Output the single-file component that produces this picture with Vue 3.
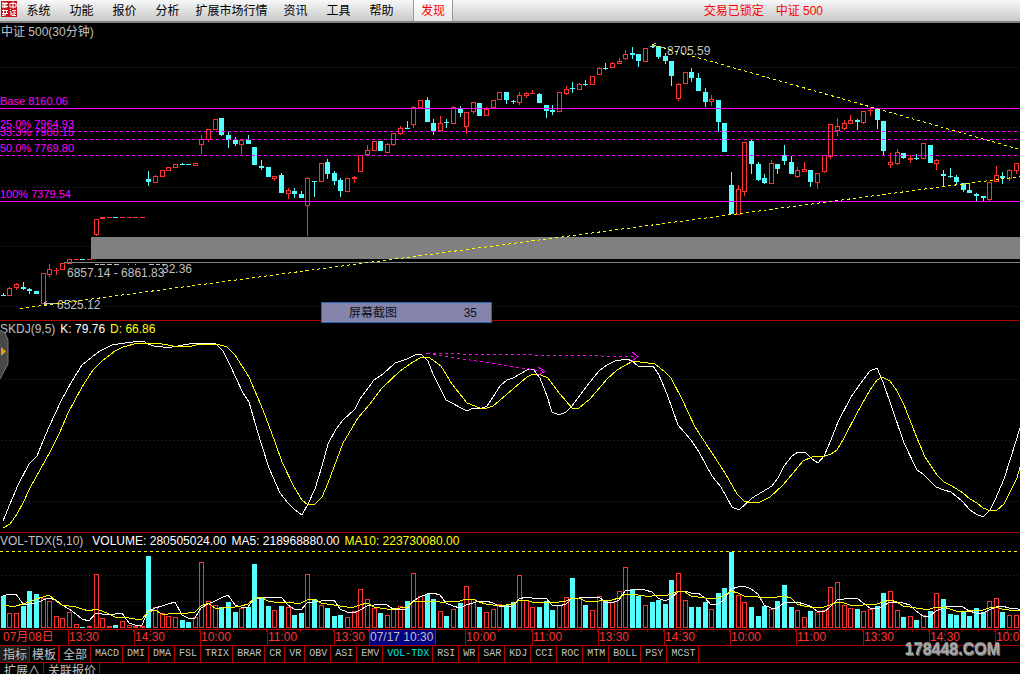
<script setup>
import { ref } from 'vue'

const menu = ['系统', '功能', '报价', '分析', '扩展市场行情', '资讯', '工具', '帮助']
const tabs = ['MACD', 'DMI', 'DMA', 'FSL', 'TRIX', 'BRAR', 'CR', 'VR', 'OBV', 'ASI', 'EMV', 'VOL-TDX', 'RSI', 'WR', 'SAR', 'KDJ', 'CCI', 'ROC', 'MTM', 'BOLL', 'PSY', 'MCST']
const active = ref('VOL-TDX')

const axis = [
  { t: '07月08日', w: 68, kind: 'first' },
  { t: '13:30', w: 66 }, { t: '14:30', w: 66 }, { t: '10:00', w: 67 },
  { t: '11:00', w: 67 }, { t: '13:30', w: 35, kind: 'short' }, { t: '07/17 10:30', w: 66, kind: 'cursor' },
  { t: '', w: 30, kind: 'rest' }, { t: '10:00', w: 67 }, { t: '11:00', w: 66 }, { t: '13:30', w: 66 },
  { t: '14:30', w: 66 }, { t: '10:00', w: 66 }, { t: '11:00', w: 67 }, { t: '13:30', w: 66 },
  { t: '14:30', w: 66 }, { t: '10:00', w: 25, kind: 'short' },
]
const axisTotal = axis.reduce((sum, a) => sum + a.w, 0)

// direction, body top, body bottom, high, low
const candleData = `c295 295 293 295,r288 295 287 295,r284 287 283 289,c287 288 282 289,c289 290 288 293,c291 293 291 293,r273 303 273 303,r269 274 264 276,r270 270 268 274,r263 269 263 269,r259 263 259 263,r259 259 259 259,c259 259 259 259,r259 259 259 259,r219 234 219 235,r217 218 217 218,r217 217 217 217,c217 217 217 217,r217 217 217 217,r217 217 217 217,r217 217 217 217,r217 217 217 217,c179 181 171 185,r176 182 175 182,r170 176 170 176,r167 170 167 170,r164 167 164 167,c164 164 163 164,c164 164 164 164,r163 165 163 165,r139 144 135 153,r129 139 129 141,r119 129 119 129,c118 134 118 135,c135 139 131 147,c140 143 137 145,r140 144 139 153,c140 143 135 143,c147 164 147 164,c166 167 160 169,c167 176 167 176,r176 178 176 180,c175 192 173 192,r190 193 188 198,c191 193 188 197,c194 197 191 197,r178 205 177 235,c181 181 181 196,r163 181 163 181,c162 173 159 178,c173 180 171 184,c180 190 178 196,r178 191 178 191,r177 178 176 182,r155 171 155 171,r150 154 145 154,r141 150 141 150,c141 150 141 150,r144 152 143 152,r133 144 133 145,r128 133 126 134,c128 128 121 128,r107 124 106 127,r100 107 100 107,c100 121 97 121,c123 130 119 134,r123 130 116 130,c122 122 119 127,r107 123 106 123,c109 112 106 116,r112 126 112 133,r102 111 102 113,c103 115 103 115,r109 115 107 115,r100 107 100 107,r92 99 92 99,c92 99 92 103,c101 101 100 103,r95 102 92 104,r93 95 92 97,r93 93 90 93,c94 102 93 102,c105 110 105 117,c110 111 105 114,r92 111 92 111,r89 93 86 94,c88 88 82 92,r84 89 83 89,c84 84 80 85,r76 84 76 84,r68 74 67 74,c68 68 63 69,r63 67 62 67,r61 63 58 63,r54 58 50 59,c53 54 47 58,c54 60 54 66,r48 61 48 61,c46 46 44 47,c46 56 46 58,c56 60 53 63,c61 75 61 85,r84 98 83 100,r72 83 72 83,c72 77 68 81,c78 90 73 90,c92 101 88 106,r99 101 95 105,c100 121 100 131,c123 151 123 151,c185 213 172 213,r189 214 185 214,r142 191 142 195,c141 163 139 173,c164 179 162 180,c178 182 174 183,r163 183 160 183,c164 168 164 173,c155 160 145 164,c162 173 156 173,r170 176 167 177,r169 171 162 171,c170 181 170 186,r173 182 173 188,r155 171 155 172,r124 156 124 158,r126 130 118 135,r123 128 120 129,r120 123 115 123,c120 121 119 129,r111 122 111 123,r110 110 107 115,c109 119 109 128,c121 150 121 155,r162 164 153 167,r152 163 149 164,c153 157 153 158,r158 159 155 162,c158 158 154 159,r143 158 143 158,c145 162 145 162,r160 163 159 169,c174 175 170 186,c176 176 168 177,c177 181 175 183,c183 189 183 191,c190 192 183 192,c194 195 193 201,c196 197 196 201,r182 199 182 200,r175 181 166 181,c176 177 172 183,r170 178 169 180,r163 170 163 173`
const volumes = [32, 15, 15, 22, 37, 34, 30, 27, 12, 10, 16, 4, 1, 2, 54, 10, 2, 3, 7, 3, 2, 2, 72, 21, 15, 12, 11, 8, 6, 11, 66, 27, 23, 21, 26, 16, 20, 21, 64, 30, 22, 18, 22, 21, 13, 15, 54, 29, 23, 20, 12, 13, 11, 17, 39, 29, 20, 15, 13, 20, 22, 27, 55, 32, 34, 29, 17, 12, 19, 25, 42, 29, 21, 16, 19, 24, 23, 26, 53, 28, 21, 21, 27, 18, 23, 31, 50, 30, 23, 18, 32, 28, 26, 37, 61, 39, 32, 23, 26, 28, 24, 48, 55, 28, 21, 21, 26, 19, 35, 40, 76, 33, 26, 21, 12, 22, 19, 27, 43, 21, 18, 11, 17, 16, 18, 41, 46, 23, 20, 19, 17, 19, 22, 35, 37, 18, 11, 12, 8, 13, 17, 35, 29, 14, 13, 16, 12, 20, 16, 27, 30, 16, 13, 13]

const barX = (i) => Math.floor(3.35 + 6.62 * i)
const candles = candleData.split(',').map((s, i) => {
  const [top, bottom, high, low] = s.slice(1).split(' ').map(Number)
  return { up: s[0] === 'r', top, bottom, high, low, x: barX(i), vol: volumes[i] }
})

// leading averages come from bars that lie left of the visible range
const average = (n, lead) => volumes.map((_, i) => {
  const v = i < lead.length ? lead[i] : volumes.slice(i - n + 1, i + 1).reduce((a, b) => a + b, 0) / n
  return `${barX(i)},${Math.round(628 - v)}`
}).join(' ') + ' 1020,610'
const ma5 = average(5, [32, 34, 34, 24])
const ma10 = average(10, [23, 22, 22, 24, 26, 29, 31, 33, 27])

const kLine = '3,521 10,504 18,485 29,464 37,456 43,441 49,427 61,401 72,381 82,365 92,357 100,351 112,345 118,344 133,342 143,341 148,344 154,346 163,347 172,347 178,346 194,343 203,344 215,343 223,351 230,365 243,393 249,402 255,423 261,443 269,468 280,493 288,503 295,510 302,515 308,504 315,489 322,466 328,444 336,429 343,420 355,409 360,399 374,380 383,374 395,363 407,359 415,355 421,354 428,361 433,374 446,400 467,411 473,408 480,409 487,406 493,397 500,386 507,380 513,378 527,370 533,369 540,378 547,396 552,412 559,415 566,412 572,406 590,382 599,371 607,365 615,361 627,359 632,361 638,366 653,366 659,375 667,394 678,425 691,440 699,452 712,476 721,487 732,507 739,510 752,498 772,486 778,478 784,466 792,456 798,452 805,452 812,459 818,463 824,456 831,440 838,422 851,397 863,380 870,371 877,368 883,382 891,405 904,443 917,470 923,474 936,487 944,490 951,492 962,501 970,510 976,514 983,517 990,510 995,500 1004,479 1011,457 1020,428'
const dLine = '3,528 10,524 17,514 23,503 30,488 50,452 60,432 68,413 82,387 93,370 102,361 115,351 123,347 138,343 157,343 173,346 192,346 200,344 217,344 227,347 235,355 249,377 263,410 275,442 282,462 294,487 302,500 308,505 315,504 322,497 328,483 343,443 358,418 370,404 382,388 400,371 413,362 420,358 428,357 433,360 441,366 452,384 467,403 480,408 487,408 493,406 513,389 527,377 533,374 541,375 548,378 560,394 572,408 579,408 590,399 607,379 617,370 633,361 655,364 665,372 671,378 682,399 695,427 712,453 725,473 737,494 744,501 752,503 760,502 770,497 783,485 803,461 812,457 825,456 831,454 837,450 843,440 857,413 870,390 877,380 882,377 890,381 897,391 904,405 917,438 925,457 937,475 944,482 952,486 963,493 970,499 977,503 983,508 991,511 997,510 1004,504 1017,478 1020,467'

const levels = [
  { t: 'Base 8160.06', y: 105 }, { t: '25.0% 7964.93', y: 128 }, { t: '33.3% 7900.15', y: 136 },
  { t: '50.0% 7769.80', y: 152 }, { t: '100% 7379.54', y: 198 },
]
</script>

<template>
  <div class="app">
    <header class="bar">
      <svg class="logo" viewBox="0 0 16 16" aria-hidden="true">
        <rect width="16" height="16" fill="#c4161c" />
        <g stroke="#fff" fill="none">
          <path d="M9 2.5h6v3.500h-6zM12 0.500v7M1 2.500h6M2 1v6M5 1v6M1 5.500h6M3.500 3v4" />
          <path d="M1 9.500h6M1 12.500h6M2.500 8.500v6M5.500 9v3M4 12v3M1 14.500h2M9 8.500h1M9 10.500h1v4M11 9.500h4M13 9.500v5M11 14.500h4M11 12v2M13 12h2" />
        </g>
      </svg>
      <nav class="menu">
        <button v-for="m in menu" :key="m" type="button" :class="{ wide: m.length > 2 }">{{ m }}</button>
      </nav>
      <button type="button" class="discover">发现</button>
      <p class="status"><span>交易已锁定</span><span>中证 500</span></p>
    </header>

    <section class="panel">
      <svg class="plot" viewBox="0 23 1020 298">
        <path class="grid" d="M1 67.500H1020M1 127.500H1020M1 187.500H1020M1 246.500H1020M1 306.500H1020" />
        <rect x="91" y="237" width="929" height="22" fill="#808080" />
        <path class="line" d="M64 262.500H1020" stroke="#808080" />
        <g v-for="(c, i) in candles" :key="i" class="line" :class="c.up ? 'up' : 'down'">
          <template v-if="c.up">
            <path v-if="c.high < c.top" :d="`M${c.x + 0.5} ${c.high}V${c.top}`" />
            <path v-if="c.low > c.bottom" :d="`M${c.x + 0.5} ${c.bottom + 1}V${c.low + 1}`" />
            <path v-if="c.top === c.bottom" :d="`M${c.x - 2} ${c.top + 0.5}h5`" />
            <rect v-else :x="c.x - 1.5" :y="c.top + 0.5" width="4" :height="c.bottom - c.top" />
          </template>
          <template v-else>
            <path :d="`M${c.x + 0.5} ${c.high}V${c.low + 1}`" />
            <rect class="solid" :x="c.x - 2" :y="c.top" width="5" :height="c.bottom - c.top + 1" />
          </template>
        </g>
        <g class="line magenta">
          <path d="M0 108.500H1020M0 201.500H1020" />
          <path class="dash" d="M0 131.500H1020M0 139.500H1020M0 155.500H1020" />
        </g>
        <g class="magenta-text">
          <text v-for="l in levels" :key="l.t" x="0" :y="l.y">{{ l.t }}</text>
        </g>
        <g class="marks">
          <text x="667" y="55">8705.59</text>
          <text x="57" y="309">6525.12</text>
          <text x="162" y="273">32.36</text>
          <text x="67" y="277">6857.14 - 6861.83</text>
        </g>
        <g class="line" stroke="#c0c0c0">
          <path d="M95 264.500h4M100 264.500h5M107 264.500h5M114 264.500h5M128 264.500h1M135 264.500h1M149 264.500h5M156 264.500h4M162 264.500h4" />
          <path d="M44 303.500H56M44 303.500L47 301M44 303.500L47 306M652 45L665 48M652 45L656 43M652 45L654 48" />
        </g>
        <path class="line dash yellow" d="M20 308.500L1020 176.500M652 44.500L1020 149.500" />
        <path class="line divider" d="M0 320.500H1020" />
      </svg>
      <h1 class="legend title">中证 500(30分钟)</h1>
      <div class="popup"><span>屏幕截图</span><span>35</span></div>
    </section>

    <section class="panel">
      <svg class="plot" viewBox="0 321 1020 212">
        <path class="grid" d="M1 379.500H1020M1 440.500H1020M1 501.500H1020" />
        <polyline class="line white" :points="kLine" />
        <polyline class="line yellow" :points="dLine" />
        <g class="line magenta">
          <path class="dash" d="M427 353.500L637 356.500M427 353.500L545 371.500" />
          <path d="M632 352L638 356.500L632 361M538 367L545 371.500L538 375M426 353.500h3" />
        </g>
        <path class="line divider" d="M0 532.500H1020" />
      </svg>
      <p class="legend"><span>SKDJ(9,5)</span><span class="c-white">K: 79.76</span><span class="c-yellow">D: 66.86</span></p>
      <button type="button" class="handle" aria-label="展开">
        <svg viewBox="0 0 10 52" aria-hidden="true">
          <path d="M0 1L5 4L8 11V35L0 50z" fill="#484848" />
          <path d="M0 1L5 4L8 11V35L0 50" fill="none" stroke="#777" />
          <path d="M1 18L6 22.500L1 27z" fill="#e6a100" />
        </svg>
      </button>
    </section>

    <section class="panel">
      <svg class="plot" viewBox="0 533 1020 97">
        <path class="grid" d="M1 575.500H1020M1 601.500H1020" />
        <path class="line dash yellow" d="M0 551.500H1020" />
        <g v-for="(c, i) in candles" :key="i" class="line" :class="c.up ? 'up' : 'down'">
          <rect v-if="c.up" :x="c.x - 1.5" :y="628.5 - c.vol" width="4" :height="c.vol - 1" />
          <rect v-else class="solid" :x="c.x - 2" :y="628 - c.vol" width="5" :height="c.vol" />
        </g>
        <polyline class="line white" :points="ma5" />
        <polyline class="line yellow" :points="ma10" />
        <path class="line divider" d="M0 629.500H1020" />
      </svg>
      <p class="legend"><span class="lead">VOL-TDX(5,10)</span><span class="c-white">VOLUME: 280505024.00</span><span class="c-white">MA5: 218968880.00</span><span class="c-yellow">MA10: 223730080.00</span></p>
    </section>

    <footer class="foot">
      <div class="axis">
        <span v-for="(a, i) in axis" :key="i" :class="a.kind" :style="{ width: (a.w / axisTotal) * 100 + '%' }">{{ a.t }}</span>
      </div>
      <div class="tabs">
        <button type="button" class="cn pressed">指标</button>
        <button type="button" class="cn thick">模板</button>
        <button type="button" class="cn">全部</button>
        <button v-for="t in tabs" :key="t" type="button" :class="{ active: t === active }" @click="active = t">{{ t }}</button>
      </div>
      <div class="watermark">178448.COM</div>
    </footer>
    <div class="extra">
      <button type="button">扩展∧</button>
      <button type="button">关联报价</button>
    </div>
  </div>
</template>

<style>
body {
  background: #000;
}
</style>

<style scoped>
.app {
  height: 100vh;
  overflow: hidden;
  display: flex;
  flex-direction: column;
  background: #000;
  color: #c0c0c0;
  font: 12px/16px "Liberation Sans", "Noto Sans CJK SC", sans-serif;
}
button {
  margin: 0;
  padding: 0;
  border: 0;
  background: none;
  color: inherit;
  font: inherit;
  white-space: nowrap;
}
p, h1 {
  margin: 0;
  font-size: 12px;
  font-weight: normal;
}
.bar {
  flex: none;
  display: flex;
  height: 21px;
  border-bottom: 2px solid #808080;
  background: linear-gradient(#f8f8f8, #c8c8c8);
  color: #000;
}
.logo {
  flex: none;
  width: 16px;
  height: 16px;
  margin: 1px 0 0 1px;
}
.menu {
  display: flex;
  margin-right: 10px;
}
.menu button {
  width: 43px;
}
.menu .wide {
  width: 85px;
}
.discover {
  width: 40px;
  border: solid #999;
  border-width: 0 1px;
  background: linear-gradient(#fff, #e8e8e8);
  color: #f00;
}
.status {
  display: flex;
  align-items: center;
  gap: 12px;
  margin: 0 197px 0 auto;
  color: #f00;
}
.panel {
  flex: none;
  position: relative;
}
.plot {
  display: block;
  width: 100%;
}
.line {
  fill: none;
  stroke-width: 1;
  shape-rendering: crispEdges;
}
.grid {
  stroke: #a00000;
  stroke-dasharray: 1 3;
  shape-rendering: crispEdges;
}
.dash {
  stroke-dasharray: 3 3;
}
.up { stroke: #ff3232; }
.down { stroke: #54ffff; }
.solid {
  fill: #54ffff;
  stroke: none;
}
.magenta { stroke: #f0f; }
.yellow { stroke: #ff0; }
.white { stroke: #fff; }
.divider { stroke: #b00000; }
.magenta-text {
  fill: #f0f;
  font-size: 11px;
}
.marks { fill: #c0c0c0; }
.legend {
  position: absolute;
  left: 0;
  top: 0;
  display: flex;
  gap: 5px;
  white-space: nowrap;
}
.title {
  left: 1px;
  top: 1px;
}
.lead {
  margin-right: 4px;
}
.c-white { color: #fff; }
.c-yellow { color: #ff0; }
.popup {
  position: absolute;
  z-index: 1;
  left: 321px;
  top: 279px;
  box-sizing: border-box;
  width: 171px;
  height: 21px;
  padding: 0 14px 0 27px;
  display: flex;
  justify-content: space-between;
  align-items: center;
  border: 1px solid #2468b4;
  background: #8484ac;
  color: #101018;
}
.handle {
  position: absolute;
  left: 0;
  top: 8px;
  width: 10px;
  height: 52px;
}
.handle svg {
  display: block;
}
.foot {
  flex: none;
  position: relative;
}
.axis {
  display: flex;
  height: 15px;
  border-bottom: 1px solid #b00000;
  color: #ff3232;
  line-height: 15px;
}
.axis span {
  flex: none;
  box-sizing: border-box;
  overflow: hidden;
  border-left: 1px solid #b00000;
  background: linear-gradient(90deg, transparent calc(100% - 1px), #b00000 0) 0 0 / 25% 2px repeat-x;
  white-space: nowrap;
}
.axis .first {
  padding-left: 3px;
  border-left: 0;
  background: none;
}
.axis .short {
  background-size: 50% 2px;
}
.axis .cursor {
  background: #000080;
  color: #c0c0c0;
  line-height: 14px;
}
.axis .rest {
  background: none;
}
.tabs {
  display: flex;
  height: 16px;
  border-bottom: 1px solid #b00000;
}
.tabs button {
  flex: none;
  padding: 0 3px 0 4px;
  border-right: 1px solid #b00000;
  font: 10px/16px "Liberation Mono", monospace;
}
.tabs .cn {
  padding: 0 3px;
  font: 12px/16px "Noto Sans CJK SC", sans-serif;
}
.tabs .pressed {
  padding-right: 2px;
  background: #1c1c1c;
}
.tabs .thick {
  padding: 0 2px;
  border-right-width: 2px;
}
.tabs .active {
  color: #00e8e8;
}
.extra {
  display: flex;
  flex: 1;
  min-height: 0;
  overflow: hidden;
}
.extra button {
  align-self: flex-start;
  padding: 0 3px 0 4px;
  border-right: 1px solid #b00000;
}
.watermark {
  position: absolute;
  right: 20px;
  top: 8px;
  color: #a8a8a8;
  font: bold 16px/24px "Liberation Sans", sans-serif;
  text-shadow: 1px 1px 0 #666, 0 -1px 0 #888;
}
</style>
